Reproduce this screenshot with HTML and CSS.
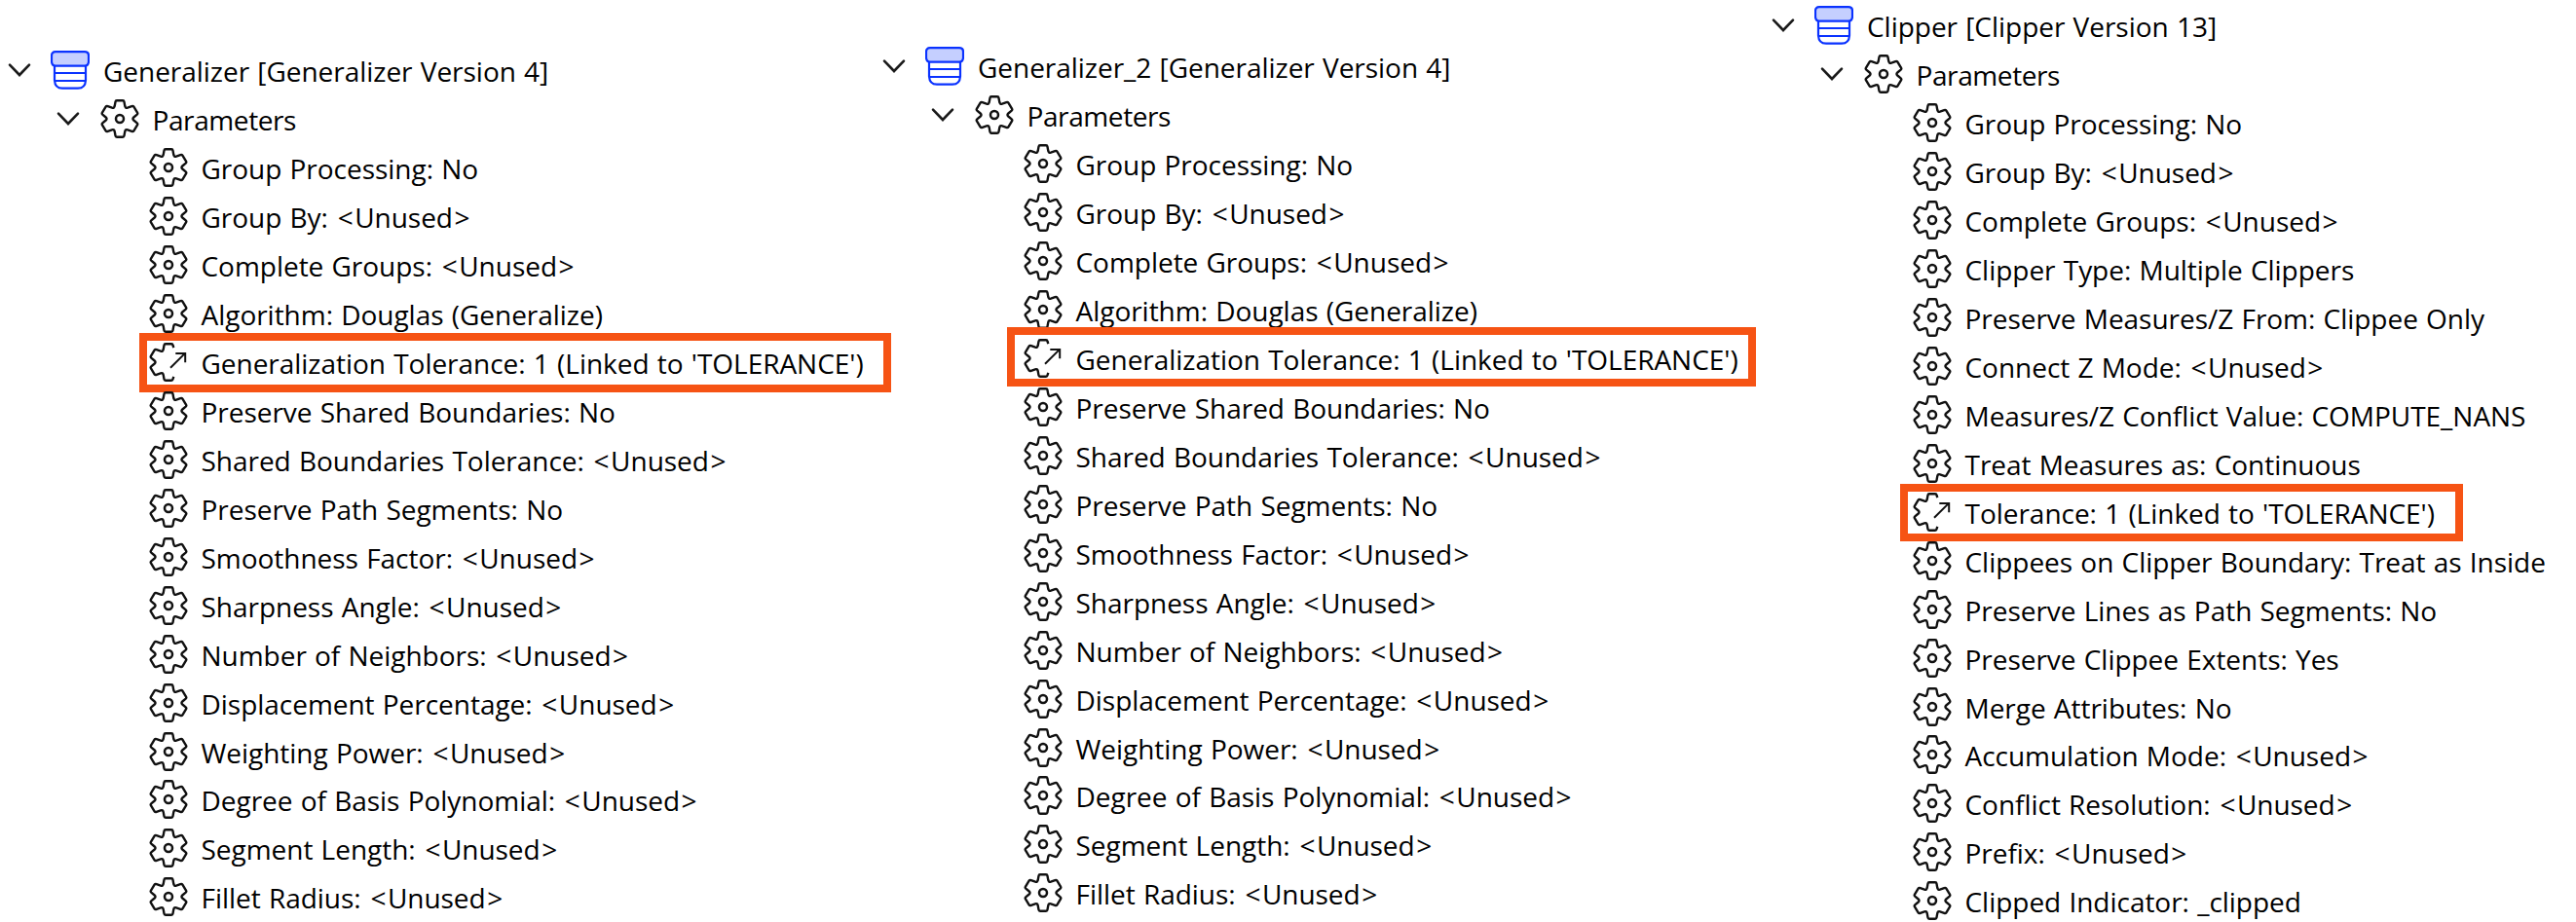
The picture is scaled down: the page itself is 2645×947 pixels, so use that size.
FILE: index.html
```html
<!DOCTYPE html>
<html lang="en">
<head>
    <meta charset="UTF-8">
    <meta name="viewport" content="width=device-width, initial-scale=1.0">
    <title>Transformer Parameters</title>
    <link rel="stylesheet" href="styles.css">
</head>
<body>
    <!-- shared icons -->
    <svg class="icon-defs" width="0" height="0">
        <symbol id="chevron" viewBox="0 0 40 40">
            <path d="M10 14.6L20 25L30 14.6" fill="none" stroke="#1a1a1a" stroke-width="2.6" stroke-linecap="round"/>
        </symbol>
        <symbol id="layer" viewBox="0 0 40 40">
            <path d="M4 15.7V30.5Q4.500 38.700 12 38.700H28Q35.500 38.700 36 30.500V15.700" fill="#fff" stroke="#0a32ff" stroke-width="2.2"/>
            <path d="M4 23H36M4 31H36" stroke="#0a32ff" stroke-width="2.2"/>
            <path d="M5 1.200H35Q39 1.200 39 5.200V11.500Q38.500 15.700 35 15.700H5Q1.500 15.700 1 11.500V5.200Q1 1.200 5 1.200Z" fill="#c5cfff" stroke="#0a32ff" stroke-width="2.2"/>
        </symbol>
        <symbol id="gear" viewBox="0 0 40 40">
            <path d="M17 1.300H23Q24.300 1.300 24.500 2.600L25.300 7.100Q25.800 9.300 28 8.700L32.300 7.100Q33.700 6.600 34.400 7.700L38 13.700Q38.700 14.800 37.700 15.700L34.300 18.500Q32.600 20 34.300 21.500L37.700 24.300Q38.700 25.200 38 26.300L34.400 32.300Q33.700 33.400 32.300 32.900L28 31.300Q25.800 30.700 25.300 32.900L24.500 37.400Q24.300 38.700 23 38.700H17Q15.700 38.700 15.500 37.400L14.700 32.900Q14.200 30.700 12 31.300L7.700 32.900Q6.300 33.400 5.600 32.300L2 26.300Q1.300 25.200 2.300 24.300L5.700 21.500Q7.400 20 5.700 18.500L2.300 15.700Q1.300 14.800 2 13.700L5.600 7.700Q6.300 6.600 7.700 7.100L12 8.700Q14.200 9.300 14.700 7.100L15.500 2.600Q15.700 1.300 17 1.300Z" fill="none" stroke="#111" stroke-width="2.4"/>
            <circle cx="20" cy="20" r="4" fill="none" stroke="#111" stroke-width="2.5"/>
        </symbol>
        <symbol id="gear-link" viewBox="0 0 40 40">
            <path d="M25.300 5.200L24.500 2.600Q24.300 1.300 23 1.300H17Q15.700 1.300 15.500 2.600L14.700 7.100Q14.200 9.300 12 8.700L7.700 7.100Q6.300 6.600 5.600 7.700L2 13.700Q1.300 14.800 2.300 15.700L5.700 18.500Q7.400 20 5.700 21.500L2.300 24.300Q1.300 25.200 2 26.300L5.600 32.300Q6.300 33.400 7.700 32.900L12 31.300Q14.200 30.700 14.700 32.900L15.500 37.400Q15.700 38.700 17 38.700H23Q24.300 38.700 24.500 37.400L25.300 34.800" fill="none" stroke="#111" stroke-width="2.4"/>
            <path d="M22 25.700L37 10.900M27.300 10.900H37.200V20.300" fill="none" stroke="#111" stroke-width="2"/>
        </symbol>
    </svg>

    <div class="trees">
        <div class="tree tree-generalizer">
            <div class="row"><svg class="chevron"><use href="#chevron"/></svg><svg class="icon"><use href="#layer"/></svg><span>Generalizer [Generalizer Version 4]</span></div>
            <div class="row level-1"><svg class="chevron"><use href="#chevron"/></svg><svg class="icon"><use href="#gear"/></svg><span>Parameters</span></div>
            <div class="params">
                <div class="row"><svg class="icon"><use href="#gear"/></svg><span>Group Processing: No</span></div>
                <div class="row"><svg class="icon"><use href="#gear"/></svg><span>Group By: <i>&lt;</i>Unused<i>&gt;</i></span></div>
                <div class="row"><svg class="icon"><use href="#gear"/></svg><span>Complete Groups: <i>&lt;</i>Unused<i>&gt;</i></span></div>
                <div class="row"><svg class="icon"><use href="#gear"/></svg><span>Algorithm: Douglas (Generalize)</span></div>
                <div class="row linked"><svg class="icon"><use href="#gear-link"/></svg><span>Generalization Tolerance: 1 (Linked to 'TOLERANCE')</span></div>
                <div class="row"><svg class="icon"><use href="#gear"/></svg><span>Preserve Shared Boundaries: No</span></div>
                <div class="row"><svg class="icon"><use href="#gear"/></svg><span>Shared Boundaries Tolerance: <i>&lt;</i>Unused<i>&gt;</i></span></div>
                <div class="row"><svg class="icon"><use href="#gear"/></svg><span>Preserve Path Segments: No</span></div>
                <div class="row"><svg class="icon"><use href="#gear"/></svg><span>Smoothness Factor: <i>&lt;</i>Unused<i>&gt;</i></span></div>
                <div class="row"><svg class="icon"><use href="#gear"/></svg><span>Sharpness Angle: <i>&lt;</i>Unused<i>&gt;</i></span></div>
                <div class="row"><svg class="icon"><use href="#gear"/></svg><span>Number of Neighbors: <i>&lt;</i>Unused<i>&gt;</i></span></div>
                <div class="row"><svg class="icon"><use href="#gear"/></svg><span>Displacement Percentage: <i>&lt;</i>Unused<i>&gt;</i></span></div>
                <div class="row"><svg class="icon"><use href="#gear"/></svg><span>Weighting Power: <i>&lt;</i>Unused<i>&gt;</i></span></div>
                <div class="row tight"><svg class="icon"><use href="#gear"/></svg><span>Degree of Basis Polynomial: <i>&lt;</i>Unused<i>&gt;</i></span></div>
                <div class="row"><svg class="icon"><use href="#gear"/></svg><span>Segment Length: <i>&lt;</i>Unused<i>&gt;</i></span></div>
                <div class="row"><svg class="icon"><use href="#gear"/></svg><span>Fillet Radius: <i>&lt;</i>Unused<i>&gt;</i></span></div>
            </div>
        </div>

        <div class="tree tree-generalizer-2">
            <div class="row"><svg class="chevron"><use href="#chevron"/></svg><svg class="icon"><use href="#layer"/></svg><span>Generalizer_2 [Generalizer Version 4]</span></div>
            <div class="row level-1"><svg class="chevron"><use href="#chevron"/></svg><svg class="icon"><use href="#gear"/></svg><span>Parameters</span></div>
            <div class="params">
                <div class="row"><svg class="icon"><use href="#gear"/></svg><span>Group Processing: No</span></div>
                <div class="row"><svg class="icon"><use href="#gear"/></svg><span>Group By: <i>&lt;</i>Unused<i>&gt;</i></span></div>
                <div class="row"><svg class="icon"><use href="#gear"/></svg><span>Complete Groups: <i>&lt;</i>Unused<i>&gt;</i></span></div>
                <div class="row"><svg class="icon"><use href="#gear"/></svg><span>Algorithm: Douglas (Generalize)</span></div>
                <div class="row linked"><svg class="icon"><use href="#gear-link"/></svg><span>Generalization Tolerance: 1 (Linked to 'TOLERANCE')</span></div>
                <div class="row"><svg class="icon"><use href="#gear"/></svg><span>Preserve Shared Boundaries: No</span></div>
                <div class="row"><svg class="icon"><use href="#gear"/></svg><span>Shared Boundaries Tolerance: <i>&lt;</i>Unused<i>&gt;</i></span></div>
                <div class="row"><svg class="icon"><use href="#gear"/></svg><span>Preserve Path Segments: No</span></div>
                <div class="row"><svg class="icon"><use href="#gear"/></svg><span>Smoothness Factor: <i>&lt;</i>Unused<i>&gt;</i></span></div>
                <div class="row"><svg class="icon"><use href="#gear"/></svg><span>Sharpness Angle: <i>&lt;</i>Unused<i>&gt;</i></span></div>
                <div class="row"><svg class="icon"><use href="#gear"/></svg><span>Number of Neighbors: <i>&lt;</i>Unused<i>&gt;</i></span></div>
                <div class="row"><svg class="icon"><use href="#gear"/></svg><span>Displacement Percentage: <i>&lt;</i>Unused<i>&gt;</i></span></div>
                <div class="row"><svg class="icon"><use href="#gear"/></svg><span>Weighting Power: <i>&lt;</i>Unused<i>&gt;</i></span></div>
                <div class="row tight"><svg class="icon"><use href="#gear"/></svg><span>Degree of Basis Polynomial: <i>&lt;</i>Unused<i>&gt;</i></span></div>
                <div class="row"><svg class="icon"><use href="#gear"/></svg><span>Segment Length: <i>&lt;</i>Unused<i>&gt;</i></span></div>
                <div class="row"><svg class="icon"><use href="#gear"/></svg><span>Fillet Radius: <i>&lt;</i>Unused<i>&gt;</i></span></div>
            </div>
        </div>

        <div class="tree tree-clipper">
            <div class="row"><svg class="chevron"><use href="#chevron"/></svg><svg class="icon"><use href="#layer"/></svg><span>Clipper [Clipper Version 13]</span></div>
            <div class="row level-1"><svg class="chevron"><use href="#chevron"/></svg><svg class="icon"><use href="#gear"/></svg><span>Parameters</span></div>
            <div class="params">
                <div class="row"><svg class="icon"><use href="#gear"/></svg><span>Group Processing: No</span></div>
                <div class="row"><svg class="icon"><use href="#gear"/></svg><span>Group By: <i>&lt;</i>Unused<i>&gt;</i></span></div>
                <div class="row"><svg class="icon"><use href="#gear"/></svg><span>Complete Groups: <i>&lt;</i>Unused<i>&gt;</i></span></div>
                <div class="row"><svg class="icon"><use href="#gear"/></svg><span>Clipper Type: Multiple Clippers</span></div>
                <div class="row"><svg class="icon"><use href="#gear"/></svg><span>Preserve Measures/Z From: Clippee Only</span></div>
                <div class="row"><svg class="icon"><use href="#gear"/></svg><span>Connect Z Mode: <i>&lt;</i>Unused<i>&gt;</i></span></div>
                <div class="row"><svg class="icon"><use href="#gear"/></svg><span>Measures/Z Conflict Value: COMPUTE_NANS</span></div>
                <div class="row"><svg class="icon"><use href="#gear"/></svg><span>Treat Measures as: Continuous</span></div>
                <div class="row linked"><svg class="icon"><use href="#gear-link"/></svg><span>Tolerance: 1 (Linked to 'TOLERANCE')</span></div>
                <div class="row"><svg class="icon"><use href="#gear"/></svg><span>Clippees on Clipper Boundary: Treat as Inside</span></div>
                <div class="row"><svg class="icon"><use href="#gear"/></svg><span>Preserve Lines as Path Segments: No</span></div>
                <div class="row"><svg class="icon"><use href="#gear"/></svg><span>Preserve Clippee Extents: Yes</span></div>
                <div class="row"><svg class="icon"><use href="#gear"/></svg><span>Merge Attributes: No</span></div>
                <div class="row tight"><svg class="icon"><use href="#gear"/></svg><span>Accumulation Mode: <i>&lt;</i>Unused<i>&gt;</i></span></div>
                <div class="row"><svg class="icon"><use href="#gear"/></svg><span>Conflict Resolution: <i>&lt;</i>Unused<i>&gt;</i></span></div>
                <div class="row"><svg class="icon"><use href="#gear"/></svg><span>Prefix: <i>&lt;</i>Unused<i>&gt;</i></span></div>
                <div class="row"><svg class="icon"><use href="#gear"/></svg><span>Clipped Indicator: _clipped</span></div>
            </div>
        </div>
    </div>
</body>
</html>
```
FILE: styles.css
```css
body {
    margin: 0;
    background: #fff;
    color: #000;
    font-family: "Segoe UI", "Open Sans", "Noto Sans", sans-serif;
    font-size: 28px;
    letter-spacing: -0.03px;
    word-spacing: 1px;
    overflow: hidden;
}
.icon-defs {
    display: block;
}
.trees {
    display: grid;
    grid-template-columns: 898px 913px 1fr;
    height: 947px;
}
.tree-generalizer {
    padding-top: 47px;
}
.tree-generalizer-2 {
    padding-top: 43px;
}
.tree-clipper {
    padding-top: 1px;
}
.row {
    display: flex;
    align-items: center;
    height: 50px;
    white-space: nowrap;
    position: relative;
}
.row.tight {
    margin-top: -1px;
}
.row span {
    padding-top: 2px;
}
.level-1 {
    padding-left: 50px;
    letter-spacing: -0.4px;
}
.params {
    padding-left: 152px;
}
.chevron {
    width: 40px;
    height: 40px;
    margin-right: 12px;
}
.icon {
    width: 40px;
    height: 40px;
    margin-right: 14px;
}
.level-1 .icon,
.params .icon {
    margin-left: 0.5px;
}
.row i {
    display: inline-block;
    width: 19px;
    font-style: normal;
    text-align: center;
}

/* orange frame around the linked parameter */
.linked::after {
    content: "";
    position: absolute;
    top: -5px;
    left: -9px;
    width: 772px;
    height: 61px;
    box-sizing: border-box;
    border: 8px solid #f65314;
}
.tree-generalizer-2 .linked::after {
    top: -7px;
    left: -16px;
    width: 769px;
}
.tree-clipper .linked::after {
    top: -4px;
    left: -12px;
    width: 578px;
    height: 59px;
}
```
